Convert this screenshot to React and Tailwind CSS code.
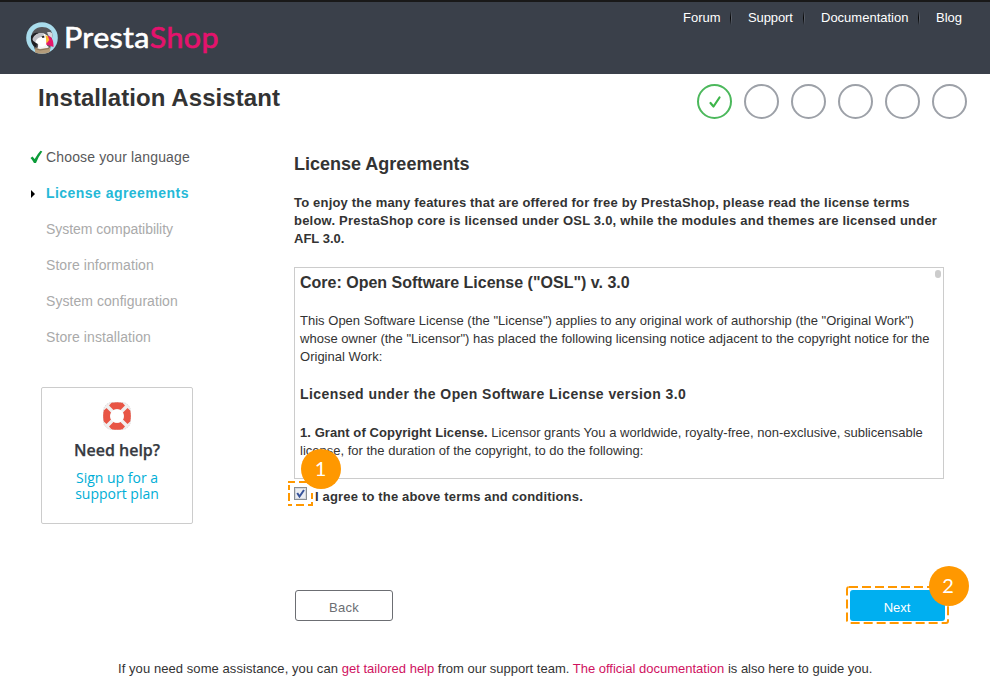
import React from "react";

const NAV = [
  ["Forum", "w-[61px] pl-[13px]"],
  ["Support", "w-[73px] pl-[17px] tracking-[-0.1px]"],
  ["Documentation", "w-[115px] pl-[17px]"],
  ["Blog", "w-[60px] pl-[17px]"],
];

const STEPS = [
  ["System compatibility", "tracking-[-0.03px]"],
  ["Store information", "tracking-[0.07px]"],
  ["System configuration", "tracking-[0.05px]"],
  ["Store installation", "tracking-[0.08px]"],
];

function Line({ children, className = "" }) {
  return (
    <span className="block h-[18px] whitespace-nowrap">
      <span className={className}>{children}</span>
    </span>
  );
}

function Puffin() {
  return (
    <svg className="h-8 w-8 shrink-0" viewBox="0 0 32 32">
      <defs>
        <clipPath id="disc"><circle cx="16" cy="16" r="15.800" /></clipPath>
      </defs>
      <g clipPath="url(#disc)">
        <rect width="32" height="32" fill="#a9dcec" />
        <path d="M5 17C5 9 10 5 16 5C22 5 26 8 26.500 13L24 28H9L5 17Z" fill="#57575b" />
        <path d="M5 14C7 11 10 10 13 11L11 22L10 26C6 23 4.500 20 5 14Z" fill="#1f1f23" />
        <path d="M8 16C9 12 13 10.500 18 11.500L22 14L21 23L22 28H11C11 26 13 24 12 22C9 21 7.500 19 8 16Z" fill="#fff" />
        <path d="M6.500 17C8 12 13 10.500 18 11.500L16.500 15C13 15 10.500 16.500 9.500 20C7.500 19.500 6.500 18.500 6.500 17Z" fill="#c0c0c6" />
        <path d="M15.500 14.500L18 13.500L18.500 15.500L16.500 16Z" fill="#222" />
        <path d="M21 10.500C23 9.500 25.500 10 26.500 12L26 16L23 14.500Z" fill="#d6d6db" />
        <path d="M21.500 14C25 13.500 28 18 27.500 25L20 22.500L21 18Z" fill="#e5176a" />
        <path d="M19.500 13L22 14.500L23.300 18L20.500 21.500L20 17Z" fill="#fbb829" />
        <path d="M12 23C15 26 18 25 20 23L23 25L20 28H12Z" fill="#f4f4f6" />
        <path d="M9 25.500L14 27L24 25.500V32H9Z" fill="#b39b7a" />
        <path d="M9 26.500L14 28L23 26.500" fill="none" stroke="#7d6b50" strokeWidth="0.800" />
      </g>
    </svg>
  );
}

function Buoy() {
  return (
    <svg className="h-7 w-7" viewBox="0 0 28 28">
      <rect x="0.500" y="0.500" width="27" height="27" rx="8.500" fill="#f1efef" stroke="#dcd9d9" strokeDasharray="1.500 1" />
      <g fill="#e85545">
        <path d="M8.500 0.800Q14-0.500 19.500 0.800L22 3.500L17.500 8Q14 6.300 10.500 8L6 3.500Z" />
        <path d="M8.500 27.200Q14 28.500 19.500 27.200L22 24.500L17.500 20Q14 21.700 10.500 20L6 24.500Z" />
        <path d="M0.800 8.500Q-0.500 14 0.800 19.500L3.500 22L8 17.500Q6.300 14 8 10.500L3.500 6Z" />
        <path d="M27.200 8.500Q28.500 14 27.200 19.500L24.500 22L20 17.500Q21.700 14 20 10.500L24.500 6Z" />
      </g>
      <circle cx="14" cy="14" r="6.800" fill="#fff" />
    </svg>
  );
}

export default function App() {
  return (
    <div className="flex h-[687px] w-[990px] flex-col overflow-hidden bg-white font-['Liberation_Sans',Arial,sans-serif] text-[13px] leading-[18px] text-[#333]">
      <header className="flex h-[74px] shrink-0 justify-between border-t-2 border-[#191919] bg-[#3a404a]">
        <div className="flex pl-[26px] pt-5">
          <Puffin />
          <div className="ml-[6px] mt-[-1px] flex h-8 origin-left scale-x-[1.085] items-center whitespace-nowrap font-['Lato',sans-serif] text-[28px] leading-8 text-white [-webkit-text-stroke:0.6px_currentColor]">
            <span className="tracking-[0.35px]">Presta</span>
            <span className="tracking-[0.35px] text-[#e5126d]">Shop</span>
          </div>
        </div>
        <nav className="mr-[11px] flex pt-[7px] text-white">
          {NAV.map(([label, cls], i) => (
            <div key={label} className={`${cls} flex h-[18px] items-center justify-between whitespace-nowrap`}>
              <a>{label}</a>
              {i < 3 && (
                <i className="mr-[-1px] flex h-[14px]">
                  <i className="w-px bg-linear-to-b from-[#3a404a] via-[#050505] to-[#3a404a]" />
                  <i className="w-px bg-linear-to-b from-[#3a404a] via-[#5d626b] to-[#3a404a]" />
                </i>
              )}
            </div>
          ))}
        </nav>
      </header>

      <div className="flex h-[74px] shrink-0 justify-between pl-[38px] pr-[23px]">
        <h1 className="mt-2 h-8 whitespace-nowrap text-2xl font-bold leading-8 tracking-[0.07px]">Installation Assistant</h1>
        <div className="flex gap-3 pt-2.5">
          <span className="flex h-[35px] w-[35px] items-center justify-center rounded-full border-2 border-[#4cb85c]">
            <svg className="h-3.5 w-3.5" viewBox="0 0 14 14" fill="none" stroke="#3db54a" strokeWidth="2.200" strokeLinecap="round" strokeLinejoin="round">
              <path d="M2.500 8L5.500 11.500L11.500 2.500" />
            </svg>
          </span>
          {[1, 2, 3, 4, 5].map((n) => (
            <span key={n} className="h-[35px] w-[35px] rounded-full border-2 border-[#9da1a8]" />
          ))}
        </div>
      </div>

      <div className="flex h-[502px] shrink-0">
        <aside className="w-[294px] shrink-0">
          <ul className="text-sm leading-[18px] text-[#aaa]">
            <li className="flex h-9 pl-[30px] text-[#58595b]">
              <svg className="mr-[3px] mt-[2px] h-[14px] w-[13px]" viewBox="0 0 13 14">
                <path d="M0.500 8L2.500 6.500L4.700 9Q7.500 4 10.500 0.800L12.300 1.500Q8.500 6.500 6 13H4Q2.500 10 0.500 8Z" fill="#0b9b39" />
              </svg>
              <span className="whitespace-nowrap tracking-[0.15px]">Choose your language</span>
            </li>
            <li className="flex h-9 pl-[31px] font-bold text-[#25b9d7]">
              <i className="mr-[11px] mt-1.5 h-0 w-0 border-y-4 border-l-4 border-y-transparent border-l-black" />
              <span className="whitespace-nowrap tracking-[0.46px]">License agreements</span>
            </li>
            {STEPS.map(([s, cls]) => (
              <li key={s} className="h-9 pl-[46px]"><span className={cls}>{s}</span></li>
            ))}
          </ul>
          <div className="ml-[41px] mt-[23px] flex h-[137px] w-[152px] flex-col items-center rounded-[2px] border border-[#ccc] pt-3.5 text-center font-['Open_Sans',sans-serif]">
            <Buoy />
            <b className="mt-2 h-6 whitespace-nowrap text-[16px] font-semibold leading-6 text-[#363a41] [-webkit-text-stroke:0.25px_#363a41]">Need help?</b>
            <a className="mt-2 text-sm leading-4 text-[#00aed6]">Sign up for a<br />support plan</a>
          </div>
        </aside>

        <main className="w-[650px] shrink-0">
          <h2 className="mt-1 h-6 whitespace-nowrap text-lg font-bold leading-6">License Agreements</h2>
          <p className="mt-[18px] font-bold">
            <Line className="tracking-[0.19px]">To enjoy the many features that are offered for free by PrestaShop, please read the license terms</Line>
            <Line className="tracking-[0.21px]">below. PrestaShop core is licensed under OSL 3.0, while the modules and themes are licensed under</Line>
            <Line>AFL 3.0.</Line>
          </p>
          <section className="mt-[19px] flex h-[212px] justify-between border border-[#ccc] pl-[5px] pr-[2px] pt-[5px]">
            <div className="w-[630px]">
              <h3 className="h-5 whitespace-nowrap text-base font-bold leading-5">Core: Open Software License ("OSL") v. 3.0</h3>
              <p className="mt-[19px] tracking-[0.016px]">
                <Line>This Open Software License (the "License") applies to any original work of authorship (the "Original Work")</Line>
                <Line>whose owner (the "Licensor") has placed the following licensing notice adjacent to the copyright notice for the</Line>
                <Line>Original Work:</Line>
              </p>
              <h4 className="mt-[19px] h-[18px] whitespace-nowrap text-sm font-bold leading-[18px] tracking-[0.425px]">Licensed under the Open Software License version 3.0</h4>
              <p className="mt-[21px]">
                <Line><b className="tracking-[0.07px]">1. Grant of Copyright License.</b> Licensor grants You a worldwide, royalty-free, non-exclusive, sublicensable</Line>
                <Line>license, for the duration of the copyright, to do the following:</Line>
              </p>
            </div>
            <i className="mt-[-3px] h-2 w-1.5 rounded-full bg-[#ccc]" />
          </section>
          <div className="relative flex h-[30px]">
            <span className="absolute left-[-6px] top-[2px] h-[25px] w-[25px]">
              <svg className="h-[25px] w-[25px]" viewBox="0 0 25 25" fill="none" stroke="#ff9800" strokeWidth="2">
                <path d="M0 1H7M11 1H19M1 4V9M1 12V20M0 24H4M8 24H16M20 24H25M24 12V18M24 21V24" />
              </svg>
            </span>
            <span className="mt-2 flex h-[13px] w-[13px] shrink-0 border border-[#8a8f94] bg-[#d4d8df] p-px">
              <svg className="h-[9px] w-[9px]" viewBox="0 0 9 9">
                <rect width="9" height="9" fill="#eceef2" />
                <path d="M1.200 4L3.500 7.500L8 1" fill="none" stroke="#37539b" strokeWidth="2" />
              </svg>
            </span>
            <label className="ml-2 mt-[9px] whitespace-nowrap font-bold tracking-[0.17px]">I agree to the above terms and conditions.</label>
            <span className="absolute left-[7px] top-[-30px] flex h-10 w-10 items-center justify-center rounded-full bg-[#ff9800] pb-0.5 pr-px font-['Lato',sans-serif] text-xl text-white">1</span>
          </div>

          <div className="mt-[81px] flex justify-between pl-px">
            <button className="h-[31px] w-[98px] rounded-[3px] border border-[#6c6e73] pt-[5px] leading-[18px] tracking-[0.3px] text-[#6c6e73]">Back</button>
            <div className="relative mr-[-1px] w-[95px]">
              <button className="h-[31px] w-[95px] rounded-[3px] bg-[#00aff0] pr-px pt-1 text-white">Next</button>
              <svg className="absolute left-[-4px] top-[-4px] h-[38px] w-[103px]" viewBox="0 0 103 38" fill="none" stroke="#ff9800" strokeWidth="2">
                <rect x="1" y="1" width="101" height="36" rx="2" strokeDasharray="9 4" />
              </svg>
              <span className="absolute left-[79px] top-[-24px] flex h-10 w-10 items-center justify-center rounded-full bg-[#ff9800] pb-0.5 pr-0.5 font-['Lato',sans-serif] text-xl text-white">2</span>
            </div>
          </div>
        </main>
      </div>

      <footer className="mt-[10px] h-[18px] whitespace-nowrap pl-[118px]">
        <span className="tracking-[0.07px]">If you need some assistance, you can </span><a className="text-[#d0125f]">get tailored help</a> from our support team. <a className="text-[#d0125f]">The official documentation</a> is also here to guide you.
      </footer>
    </div>
  );
}
